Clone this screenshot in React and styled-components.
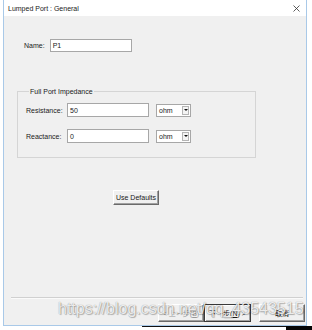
import React from "react";
import styled, { createGlobalStyle } from "styled-components";

const GlobalStyle = createGlobalStyle`
  html, body {
    margin: 0;
    padding: 0;
    background: #ffffff;
  }
  * {
    box-sizing: border-box;
  }
`;

const UI_FONT = `"Liberation Sans", "Noto Sans CJK SC", sans-serif`;

const Page = styled.div`
  position: relative;
  width: 312px;
  height: 330px;
  overflow: hidden;
  background: #ffffff;
  display: flex;
  flex-direction: column;
  font-family: ${UI_FONT};
  font-size: 7px;
  color: #1a1a1a;
`;

const Window = styled.div`
  margin-left: 3px;
  width: 304px;
  height: 326px;
  flex: none;
  border: 1px solid #a9c9e8;
  border-top: none;
  background: #f0f0f0;
  display: flex;
  flex-direction: column;
`;

const TitleBar = styled.div`
  height: 16px;
  flex: none;
  background: #ffffff;
  display: flex;
  align-items: center;
  justify-content: space-between;
  padding: 0 6px 0 4px;
  font-size: 7px;
  color: #222;
`;

const CloseButton = styled.svg`
  width: 7px;
  height: 7px;
  display: block;
`;

const Body = styled.div`
  flex: 1;
  display: flex;
  flex-direction: column;
  align-items: flex-start;
`;

const NameRow = styled.div`
  margin-top: 23px;
  margin-left: 20px;
  display: flex;
  align-items: center;
  gap: 5px;
`;

const Label = styled.span`
  width: ${(p) => (p.$width ? `${p.$width}px` : "auto")};
  flex: none;
  line-height: 9px;
`;

const TextInput = styled.div`
  width: ${(p) => p.$width}px;
  height: ${(p) => p.$height || 14}px;
  background: #ffffff;
  border: 1px solid #a7a7a7;
  display: flex;
  align-items: center;
  padding-left: 2px;
  line-height: 9px;
`;

const Group = styled.fieldset`
  margin: 35px 0 0 13px;
  width: 239px;
  padding: 7px 8px 14px 8px;
  border: 1px solid #d5d5d5;
  display: flex;
  flex-direction: column;
  gap: 12px;
`;

const Legend = styled.legend`
  margin-left: 3px;
  padding: 0 1px;
  line-height: 9px;
  font-size: 7px;
`;

const FieldRow = styled.div`
  display: flex;
  align-items: center;
  height: 14px;
`;

const Select = styled.div`
  margin-left: 7px;
  width: 35px;
  height: 13px;
  background: #ffffff;
  border: 1px solid #a7a7a7;
  display: flex;
  align-items: center;
  justify-content: space-between;
  padding: 0 1px 0 2px;
  line-height: 9px;
`;

const SelectArrow = styled.div`
  width: 7px;
  height: 9px;
  border: 1px solid #b5b5b5;
  background: #f4f4f4;
  display: flex;
  align-items: center;
  justify-content: center;
`;

const Caret = styled.div`
  width: 0;
  height: 0;
  border-left: 2px solid transparent;
  border-right: 2px solid transparent;
  border-top: 2px solid #111;
`;

const ClassicButton = styled.div`
  width: ${(p) => p.$width}px;
  height: ${(p) => p.$height}px;
  flex: none;
  display: flex;
  align-items: center;
  justify-content: center;
  background: #f0f0f0;
  border: 1px solid;
  border-color: ${(p) =>
    p.$default ? "#3a3a3a" : "#ffffff #6a6a6a #6a6a6a #ffffff"};
  box-shadow: ${(p) =>
    p.$default ? "inset 1px 1px 0 #fff, inset -1px -1px 0 #a0a0a0" : "inset -1px -1px 0 #a0a0a0"};
  color: ${(p) => (p.$disabled ? "#9a9a9a" : "#1a1a1a")};
  line-height: 9px;
  font-size: 7px;
`;

const DefaultsRow = styled.div`
  margin: 32px 0 0 109px;
`;

const Separator = styled.div`
  height: 2px;
  flex: none;
  margin: 0 3px 0 7px;
  border-top: 1px solid #d0d0d0;
  border-bottom: 1px solid #fafafa;
`;

const Footer = styled.div`
  flex: none;
  display: flex;
  justify-content: flex-end;
  padding: 5px 1px 3px 0;
`;

const ButtonPair = styled.div`
  display: flex;
  margin-right: 8px;
`;

const Underlined = styled.span`
  text-decoration: underline;
`;

const Strip = styled.div`
  height: 4px;
  flex: none;
  display: flex;
  padding-left: 142px;
`;

const StripLine = styled.div`
  flex: 1;
  border-top: 1px solid #111;
`;

const StripBlock = styled.div`
  width: 26px;
  background: #050505;
`;

const Watermark = styled.div`
  position: absolute;
  left: 58px;
  top: 300px;
  font-family: "Liberation Sans", sans-serif;
  font-size: 16px;
  line-height: 18px;
  color: rgba(255, 255, 255, 0.85);
  text-shadow: 0 0 1px rgba(0, 0, 0, 0.45), 1px 1px 1px rgba(0, 0, 0, 0.25);
  white-space: nowrap;
  pointer-events: none;
`;

export default function App() {
  return (
    <>
      <GlobalStyle />
      <Page>
        <Window>
          <TitleBar>
            <span>Lumped Port : General</span>
            <CloseButton viewBox="0 0 7 7">
              <path d="M0.5 0.5 L6.5 6.5 M6.5 0.5 L0.5 6.5" stroke="#333" strokeWidth="0.8" />
            </CloseButton>
          </TitleBar>

          <Body>
            <NameRow>
              <Label>Name:</Label>
              <TextInput $width={82} $height={13}>P1</TextInput>
            </NameRow>

            <Group>
              <Legend>Full Port Impedance</Legend>
              <FieldRow>
                <Label $width={41}>Resistance:</Label>
                <TextInput $width={82}>50</TextInput>
                <Select>
                  <span>ohm</span>
                  <SelectArrow>
                    <Caret />
                  </SelectArrow>
                </Select>
              </FieldRow>
              <FieldRow>
                <Label $width={41}>Reactance:</Label>
                <TextInput $width={82}>0</TextInput>
                <Select>
                  <span>ohm</span>
                  <SelectArrow>
                    <Caret />
                  </SelectArrow>
                </Select>
              </FieldRow>
            </Group>

            <DefaultsRow>
              <ClassicButton $width={46} $height={15}>Use Defaults</ClassicButton>
            </DefaultsRow>
          </Body>

          <Separator />
          <Footer>
            <ButtonPair>
              <ClassicButton $width={46} $height={18} $disabled>
                &lt; 上一步(<Underlined>B</Underlined>)
              </ClassicButton>
              <ClassicButton $width={47} $height={18} $default>
                下一步(<Underlined>N</Underlined>) &gt;
              </ClassicButton>
            </ButtonPair>
            <ClassicButton $width={46} $height={18}>取消</ClassicButton>
          </Footer>
        </Window>
        <Strip>
          <StripLine />
          <StripBlock />
        </Strip>
        <Watermark>https://blog.csdn.net/qq_43543515</Watermark>
      </Page>
    </>
  );
}
